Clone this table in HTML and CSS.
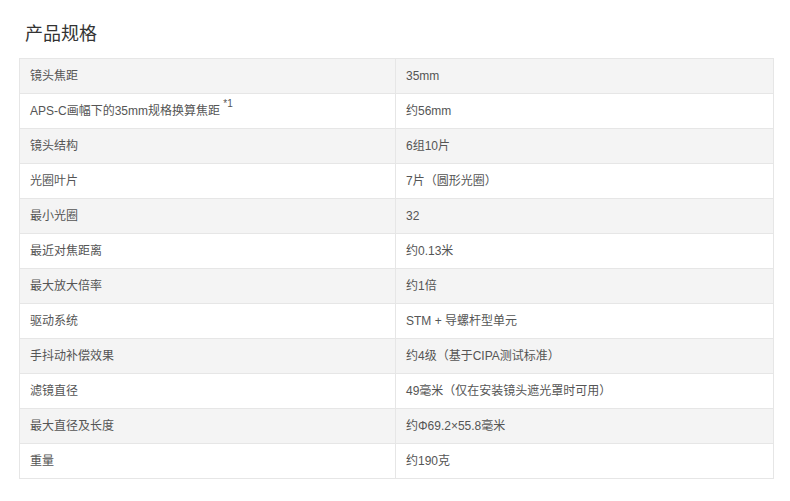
FILE: index.html
```html
<!DOCTYPE html>
<html lang="zh-CN">
<head>
<meta charset="utf-8">
<link rel="stylesheet" href="styles.css">
</head>
<body>
<div class="page">
  <h2 class="title">产品规格</h2>
  <table class="spec">
    <colgroup><col class="c1"><col class="c2"></colgroup>
    <tr><td>镜头焦距</td><td>35mm</td></tr>
    <tr><td>APS-C画幅下的35mm规格换算焦距 <sup>*1</sup></td><td>约56mm</td></tr>
    <tr><td>镜头结构</td><td>6组10片</td></tr>
    <tr><td>光圈叶片</td><td>7片（圆形光圈）</td></tr>
    <tr><td>最小光圈</td><td>32</td></tr>
    <tr><td>最近对焦距离</td><td>约0.13米</td></tr>
    <tr><td>最大放大倍率</td><td>约1倍</td></tr>
    <tr><td>驱动系统</td><td>STM + 导螺杆型单元</td></tr>
    <tr><td>手抖动补偿效果</td><td>约4级（基于CIPA测试标准）</td></tr>
    <tr><td>滤镜直径</td><td>49毫米（仅在安装镜头遮光罩时可用）</td></tr>
    <tr><td>最大直径及长度</td><td>约Φ69.2×55.8毫米</td></tr>
    <tr><td>重量</td><td>约190克</td></tr>
  </table>
</div>
</body>
</html>
```

FILE: styles.css
```css
html, body {
  margin: 0;
  padding: 0;
  background: #fff;
}
body {
  font-family: "Liberation Sans", "Noto Sans CJK SC", sans-serif;
  color: #555;
}
.page {
  padding: 22px 16px 0 19px;
}
.title {
  margin: 0 0 12px 6px;
  font-size: 18px;
  font-weight: normal;
  color: #333;
  line-height: 24px;
}
.spec {
  width: 755px;
  border-collapse: collapse;
  table-layout: fixed;
  font-size: 12px;
}
.spec .c1 {
  width: 376px;
}
.spec td {
  height: 34px;
  padding: 0 0 0 10px;
  border: 1px solid #e6e6e6;
  vertical-align: middle;
  line-height: 16px;
}
.spec tr:nth-child(odd) td {
  background: #f4f4f4;
}
.spec sup {
  font-size: 10px;
  vertical-align: top;
  line-height: 10px;
  position: relative;
  top: -4px;
}
```
